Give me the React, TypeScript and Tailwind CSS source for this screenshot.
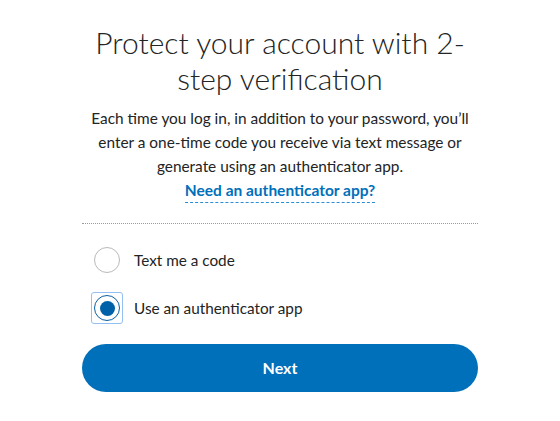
import React from "react";

export default function App() {
  return (
    <div className="w-[560px] h-[421px] bg-white flex justify-center" style={{ fontFamily: "Lato, 'Noto Sans', sans-serif" }}>
      <div className="w-[396px] flex flex-col items-stretch pt-6 text-[#222425]">
        <h1 className="text-center text-[30px] leading-[36px] font-light whitespace-nowrap">
          Protect your account with 2-
          <br />
          step verification
        </h1>
        <p className="mt-[10px] text-center text-[15.4px] leading-[24px] whitespace-nowrap">
          Each time you log in, in addition to your password, you’ll
          <br />
          enter a one-time code you receive via text message or
          <br />
          generate using an authenticator app.
        </p>
        <div className="flex justify-center">
          <a className="inline-block text-[15.5px] leading-[24px] font-bold text-[#0070ba] border-b border-dashed border-[#2a8fd6]">
            Need an authenticator app?
          </a>
        </div>
        <div className="mt-5 border-t border-dotted border-[#9a9a9a]" />
        <div className="mt-4 flex flex-col gap-2">
          <div className="h-10 flex items-center">
            <div className="ml-[9px] w-8 h-8 flex items-center justify-center">
              <div className="w-[26px] h-[26px] rounded-full border border-[#b9b9b9] bg-white" />
            </div>
            <span className="ml-[11px] text-[15.3px]">Text me a code</span>
          </div>
          <div className="h-10 flex items-center">
            <div className="ml-[9px] w-8 h-8 flex items-center justify-center rounded-[3px] border-[1.5px] border-[#93bff2]">
              <div className="w-[26px] h-[26px] rounded-full border-[1.5px] border-[#0b5fa5] bg-white flex items-center justify-center">
                <div className="w-[15px] h-[15px] rounded-full bg-[#0061a8]" />
              </div>
            </div>
            <span className="ml-[11px] text-[15.3px]">Use an authenticator app</span>
          </div>
        </div>
        <button className="mt-4 h-12 w-full rounded-full bg-[#0070ba] text-white font-bold text-[16px]">
          Next
        </button>
      </div>
    </div>
  );
}
